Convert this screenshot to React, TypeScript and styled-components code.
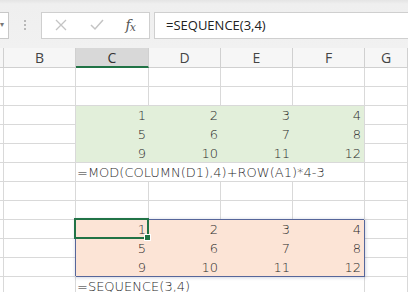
import React from 'react';
import styled, { createGlobalStyle } from 'styled-components';

const GlobalStyle = createGlobalStyle`
  html, body { margin: 0; padding: 0; overflow: hidden; background: #ffffff; }
  body { font-family: "DejaVu Sans", "Noto Sans", sans-serif; }
`;

const GRID = '#d9d9d9';
const CELL_FONT = '"DejaVu Sans", "Noto Sans CJK SC", sans-serif';

const Page = styled.div`
  width: 408px;
  height: 292px;
  overflow: hidden;
  display: flex;
  flex-direction: column;
`;

const Toolbar = styled.div`
  height: 48px;
  flex: none;
  display: flex;
  align-items: center;
  background: linear-gradient(#e4e4e4 0px, #efefef 4px, #f1f1f1 100%);
  box-sizing: border-box;
  padding-top: 2px;
`;

const NameBox = styled.div`
  width: 9px;
  height: 27px;
  box-sizing: border-box;
  background: #fff;
  border: 1px solid #c8c8c8;
  border-left: none;
  display: flex;
  align-items: center;
  justify-content: flex-start;
  color: #777;
  font-size: 8px;
  line-height: 1;
`;

const Grip = styled.div`
  width: 32px;
  display: flex;
  flex-direction: column;
  align-items: center;
  gap: 2px;
  & > span {
    width: 2px;
    height: 2px;
    background: #b8b8b8;
  }
`;

const IconBox = styled.div`
  width: 109px;
  height: 27px;
  box-sizing: border-box;
  background: #fff;
  border: 1px solid #cfcfcf;
  display: flex;
  align-items: center;
  padding-left: 13px;
`;

const IconSlot = styled.div<{ $w: number }>`
  width: ${(p) => p.$w}px;
  display: flex;
  align-items: center;
  justify-content: flex-start;
`;

const Fx = styled.span`
  font-family: "DejaVu Serif", "Liberation Serif", serif;
  font-style: italic;
  font-size: 14px;
  color: #555;
  letter-spacing: -1px;
  & sub { font-size: 11px; vertical-align: -1px; }
`;

const FormulaInput = styled.div`
  flex: 1;
  margin-left: 4px;
  height: 27px;
  box-sizing: border-box;
  background: #fff;
  border: 1px solid #cfcfcf;
  border-right: none;
  display: flex;
  align-items: center;
  padding-left: 11px;
  font-family: "Open Sans", "Noto Sans", sans-serif;
  font-size: 13px;
  color: #222;
`;

const Sheet = styled.div`
  display: grid;
  grid-template-columns: 4px 72px 73px 72px 72px 72px 1fr;
  grid-template-rows: 20px;
  grid-auto-rows: 19px;
  background: #fff;
  font-family: ${CELL_FONT};
  font-size: 13px;
  color: #2a2a2a;
`;

const HeaderCell = styled.div<{ $selected?: boolean }>`
  box-sizing: border-box;
  display: flex;
  align-items: center;
  justify-content: center;
  font-family: "Open Sans", "Noto Sans", sans-serif;
  font-size: 14px;
  color: ${(p) => (p.$selected ? '#333' : '#444')};
  background: ${(p) => (p.$selected ? '#d8d8d8' : '#f6f6f6')};
  border-right: 1px solid #d0d0d0;
  border-bottom: ${(p) => (p.$selected ? '2px solid #217346' : '1px solid #d0d0d0')};
  padding-top: ${(p) => (p.$selected ? '1px' : '0')};
`;

const Cell = styled.div`
  box-sizing: border-box;
  border-right: 1px solid ${GRID};
  border-bottom: 1px solid ${GRID};
`;

const TextCell = styled.div`
  grid-column: 3 / 7;
  box-sizing: border-box;
  border-right: 1px solid ${GRID};
  border-bottom: 1px solid ${GRID};
  padding-left: 1px;
  white-space: nowrap;
  overflow: hidden;
  font-family: ${CELL_FONT};
  font-weight: 200;
  font-size: 13px;
  line-height: 19px;
  color: #2a2a2a;
`;

const Block = styled.div<{ $tone: 'green' | 'orange' }>`
  grid-column: 3 / 7;
  grid-row: span 3;
  position: relative;
  z-index: ${(p) => (p.$tone === 'orange' ? 2 : 0)};
  box-sizing: border-box;
  display: grid;
  grid-template-columns: 73px 72px 72px 1fr;
  grid-template-rows: repeat(3, 1fr);
  background: ${(p) => (p.$tone === 'green' ? '#e2efda' : '#fce4d6')};
  border-right: 1px solid ${(p) => (p.$tone === 'green' ? GRID : '#56669a')};
  border-bottom: 1px solid ${(p) => (p.$tone === 'green' ? GRID : '#56669a')};
  box-shadow: ${(p) =>
    p.$tone === 'orange'
      ? '-1px -1px 0 0 #56669a, 0 0 3px 1px rgba(90, 100, 140, 0.25)'
      : 'none'};
`;

const Num = styled.div`
  display: flex;
  align-items: center;
  justify-content: flex-end;
  padding-right: 3px;
  font-family: ${CELL_FONT};
  font-weight: 200;
  font-size: 13px;
  line-height: 19px;
  color: #2a2a2a;
`;

const Selection = styled.div`
  position: absolute;
  left: -2px;
  top: -2px;
  width: 75px;
  height: 21px;
  box-sizing: border-box;
  border: 2px solid #217346;
  pointer-events: none;
`;

const Handle = styled.div`
  position: absolute;
  right: -4px;
  bottom: -4px;
  width: 5px;
  height: 5px;
  background: #217346;
  border: 1px solid #fff;
`;

const CloseIcon = () => (
  <svg width="12" height="12" viewBox="0 0 12 12">
    <path d="M1 1 L11 11 M11 1 L1 11" stroke="#c4c4c4" strokeWidth="1.3" fill="none" />
  </svg>
);

const CheckIcon = () => (
  <svg width="14" height="12" viewBox="0 0 14 12">
    <path d="M1 6 L5 10 L13 1" stroke="#c4c4c4" strokeWidth="1.5" fill="none" />
  </svg>
);

const data = [
  [1, 2, 3, 4],
  [5, 6, 7, 8],
  [9, 10, 11, 12],
];

const HEADERS = ['', 'B', 'C', 'D', 'E', 'F', 'G'];

type RowKind = 'empty' | 'green' | 'orange' | 'covered' | 'text1' | 'text2';
const rows: RowKind[] = [
  'empty',
  'empty',
  'green',
  'covered',
  'covered',
  'text1',
  'empty',
  'empty',
  'orange',
  'covered',
  'covered',
  'text2',
];

function renderMiddle(kind: RowKind, r: number) {
  switch (kind) {
    case 'green':
      return (
        <Block key={`m${r}`} $tone="green">
          {data.flat().map((n, i) => (
            <Num key={i}>{n}</Num>
          ))}
        </Block>
      );
    case 'orange':
      return (
        <Block key={`m${r}`} $tone="orange">
          <Selection>
            <Handle />
          </Selection>
          {data.flat().map((n, i) => (
            <Num key={i}>{n}</Num>
          ))}
        </Block>
      );
    case 'covered':
      return null;
    case 'text1':
      return <TextCell key={`m${r}`}>=MOD(COLUMN(D1),4)+ROW(A1)*4-3</TextCell>;
    case 'text2':
      return <TextCell key={`m${r}`}>=SEQUENCE(3,4)</TextCell>;
    default:
      return [0, 1, 2, 3].map((c) => <Cell key={`m${r}-${c}`} />);
  }
}

export default function App() {
  return (
    <Page>
      <GlobalStyle />
      <Toolbar>
        <NameBox>▾</NameBox>
        <Grip>
          <span />
          <span />
          <span />
        </Grip>
        <IconBox>
          <IconSlot $w={36}>
            <CloseIcon />
          </IconSlot>
          <IconSlot $w={36}>
            <CheckIcon />
          </IconSlot>
          <IconSlot $w={24}>
            <Fx>
              f<sub>x</sub>
            </Fx>
          </IconSlot>
        </IconBox>
        <FormulaInput>=SEQUENCE(3,4)</FormulaInput>
      </Toolbar>
      <Sheet>
        {HEADERS.map((h, i) => (
          <HeaderCell key={`h${i}`} $selected={h === 'C'}>
            {h}
          </HeaderCell>
        ))}
        {rows.map((kind, r) => (
          <React.Fragment key={`r${r}`}>
            <Cell />
            <Cell />
            {renderMiddle(kind, r)}
            <Cell />
          </React.Fragment>
        ))}
      </Sheet>
    </Page>
  );
}
